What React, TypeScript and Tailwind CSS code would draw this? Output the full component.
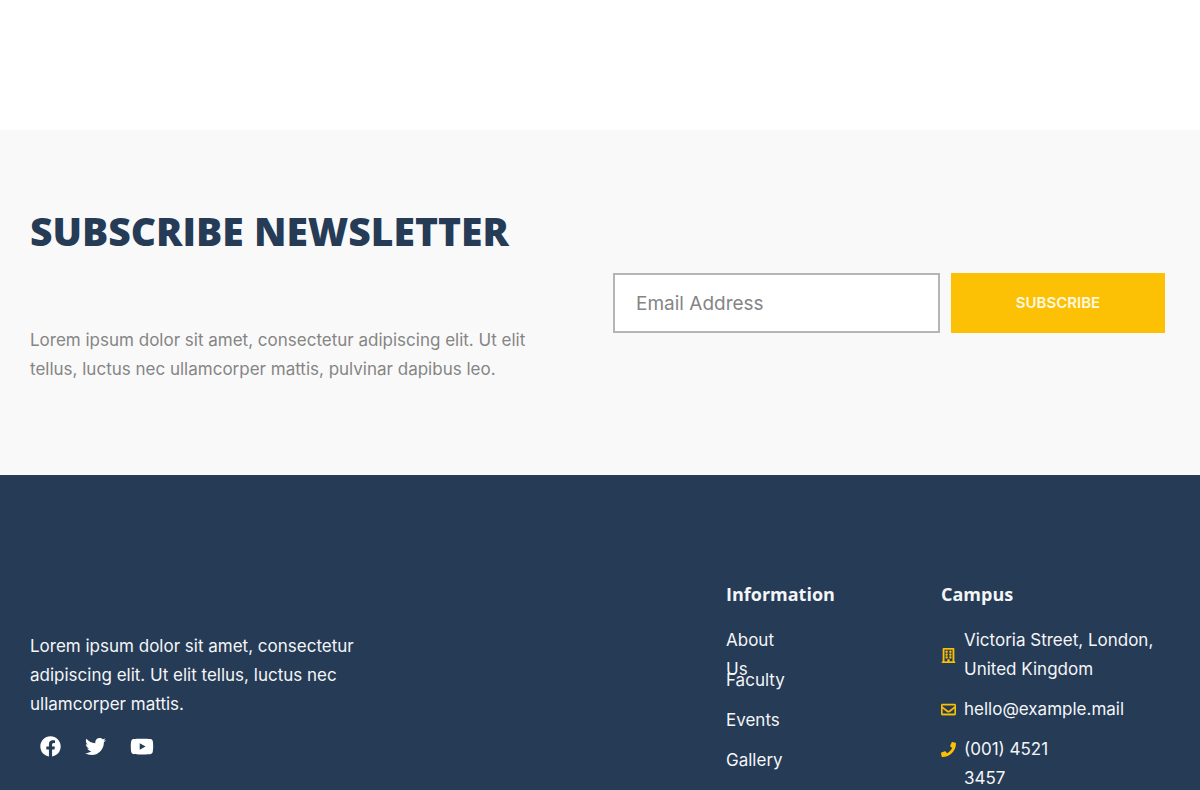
import type { ReactNode } from "react";
import {
  FaFacebook,
  FaTwitter,
  FaYoutube,
  FaRegBuilding,
  FaRegEnvelope,
  FaPhone,
} from "react-icons/fa";

const links = ["About Us", "Faculty", "Events", "Gallery"];

function Newsletter() {
  return (
    <section className="grid grid-cols-[583fr_552fr] bg-[#f9f9f9] pt-[71px] pr-[35px] pb-[91px] pl-[30px]">
      <div>
        <h2 className="font-['Open_Sans',sans-serif] text-[39px] leading-[60px] font-extrabold text-[#253b56]">
          SUBSCRIBE NEWSLETTER
        </h2>
        <p className="mt-[65px] max-w-[530px] text-[17px] leading-[29px] text-[#858585]">
          Lorem ipsum dolor sit amet, consectetur adipiscing elit. Ut elit
          tellus, luctus nec ullamcorper mattis, pulvinar dapibus leo.
        </p>
      </div>
      <form
        className="mt-[72px] grid grid-cols-[327fr_214fr] items-start gap-[11px]"
        onSubmit={(e) => e.preventDefault()}
      >
        <input
          type="email"
          aria-label="Email Address"
          placeholder="Email Address"
          className="h-[60px] w-full min-w-0 border-2 border-[#b5b5b5] bg-white px-[21px] text-[19px] text-[#858585] placeholder:text-[#858585]"
        />
        <button
          type="submit"
          className="h-[60px] bg-[#fcc105] text-[15px] font-semibold text-[#fff8e0]"
        >
          SUBSCRIBE
        </button>
      </form>
    </section>
  );
}

function ContactIcon({ children }: { children: ReactNode }) {
  return (
    <span className="flex w-[15px] shrink-0 items-center stroke-[#fcc105] text-[15px] text-[#fcc105]">
      {children}
    </span>
  );
}

function Footer() {
  return (
    <footer className="grid grow grid-cols-[696fr_215fr_229fr] bg-[#253b56] px-[30px] pt-[105px] text-[17px] leading-[29px] text-[#f4f5f7]">
      <div className="pt-[52px]">
        <p className="max-w-[345px]">
          Lorem ipsum dolor sit amet, consectetur adipiscing elit. Ut elit
          tellus, luctus nec ullamcorper mattis.
        </p>
        <div className="mt-[17px] flex gap-[24px] pl-[10px] text-[21px] text-white">
          <a href="#facebook" aria-label="Facebook"><FaFacebook /></a>
          <a href="#twitter" aria-label="Twitter"><FaTwitter /></a>
          <a href="#youtube" aria-label="YouTube"><FaYoutube className="w-[24px]" /></a>
        </div>
      </div>
      <nav aria-label="Information">
        <h3 className="font-['Open_Sans',sans-serif] text-[18px] leading-[29px] font-bold">Information</h3>
        <ul className="mt-[17px] flex flex-col gap-[11px]">
          {links.map((label) => (
            <li key={label} className="h-[29px] w-[64px]">
              <a href="#information">{label}</a>
            </li>
          ))}
        </ul>
      </nav>
      <div>
        <h3 className="font-['Open_Sans',sans-serif] text-[18px] leading-[29px] font-bold">Campus</h3>
        <ul className="mt-[17px] flex flex-col gap-[11px]">
          <li className="flex gap-[8px]">
            <ContactIcon><FaRegBuilding className="stroke-[14px]" /></ContactIcon>
            <span>Victoria Street, London, United Kingdom</span>
          </li>
          <li className="flex gap-[8px]">
            <ContactIcon><FaRegEnvelope className="stroke-[14px]" /></ContactIcon>
            <a href="mailto:hello@example.mail">hello@example.mail</a>
          </li>
          <li className="flex h-[29px] gap-[8px]">
            <ContactIcon><FaPhone /></ContactIcon>
            <a href="tel:0014523457" className="w-[90px]">(001) 4521 3457</a>
          </li>
        </ul>
      </div>
    </footer>
  );
}

export default function App() {
  return (
    <main className="flex min-h-screen flex-col overflow-hidden bg-white pt-[130px] font-['Inter',sans-serif]">
      <Newsletter />
      <Footer />
    </main>
  );
}
